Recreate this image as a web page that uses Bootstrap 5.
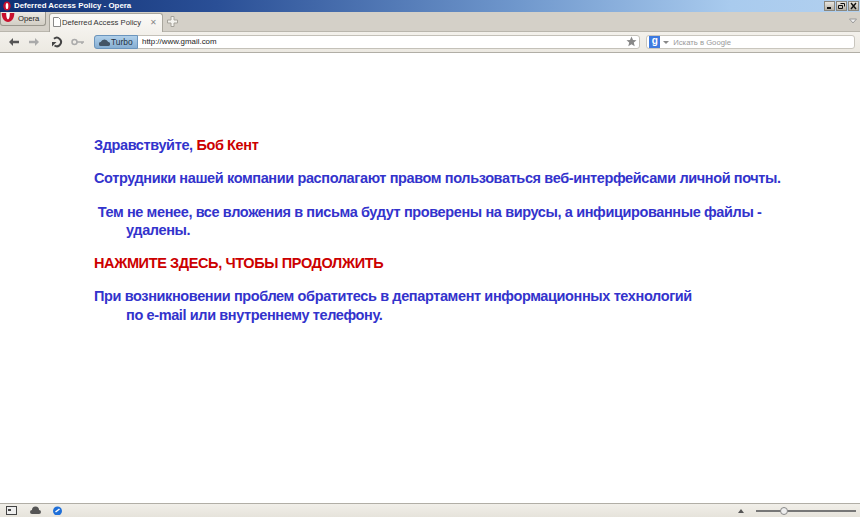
<!DOCTYPE html>
<html lang="ru"><head><meta charset="utf-8"><title>Deferred Access Policy - Opera</title>
<link href="https://cdn.jsdelivr.net/npm/bootstrap@5.3.0/dist/css/bootstrap.min.css" rel="stylesheet">
<style>
html,body{height:100%;margin:0;overflow:hidden}
body{font-family:"Liberation Sans",Arial,sans-serif;background:#fff;width:860px;height:517px}
.win{height:517px}
.titlebar{height:12px;flex:none;background:linear-gradient(90deg,#0f2f72 0,#2a4f96 25%,#6f97cc 60%,#a9cbee 85%,#b2d0ef 100%);color:#fff;font:bold 7.9px/12px "Liberation Sans",sans-serif;padding-left:14px;position:relative}
.olog{position:absolute;left:3px;top:1px;width:8px;height:10px}
.winbtns{position:absolute;right:1px;top:1px;gap:1px}
.wb{width:11px;height:10px;background:linear-gradient(#e8e5de,#b5b1a6);border:1px solid #8a877e;display:block}
.tabbar{height:19px;flex:none;background:#d4d0c8;position:relative;padding-left:49px}
.omenu{position:absolute;left:0;top:0;width:46px;height:14px;background:linear-gradient(#ece9e3,#d2cec5);border:1px solid #9a978e;border-top:0;border-radius:0 0 3px 3px;font-size:7.7px;line-height:13px;padding-left:17px;color:#222}
.omark{position:absolute;left:0;top:1px;width:14px;height:9px}
.thetab{width:114px;height:19px;margin-top:1px;background:linear-gradient(#fbfaf7,#f3f1ec);border:1px solid #a9a69d;border-bottom:0;border-radius:3px 3px 0 0;font-size:7.7px;line-height:17px;color:#333;position:relative;padding-left:12px}
.tabx{position:absolute;right:5px;top:0;color:#888;font-size:8px}
.tabdoc{position:absolute;left:3px;top:3px;width:8px;height:10px}
.plusicon{margin:4px 0 0 4px;width:11px;height:11px}
.chev{position:absolute;right:3px;top:6px;width:8px;height:6px}
.toolbar{height:22px;flex:none;background:linear-gradient(#f3f1ec,#ece9e2);border-top:1px solid #b9b6ad;border-bottom:1px solid #b1aea6;padding:0 5px 0 8px}
.ticon{width:12px;height:12px;flex:none}
.ti1{margin-right:8px}.ti2{margin-right:11px}.ti3{margin-right:8px}
.ticon.key{width:14px;margin-right:9px}
.addr{width:547px;height:14px;background:#fff;border:1px solid #c4c1b9;border-radius:3px;position:relative;font-size:7.9px;line-height:12px;color:#222}
.turbo{width:44px;height:14px;margin:-1px 0 0 -1px;background:linear-gradient(#b0d0ea,#86aed2);border:1px solid #6b95bd;border-radius:3px 0 0 3px;color:#234;padding-left:16px;margin-right:4px;position:relative;line-height:12px;flex:none;font-size:8.4px}
.cloudi{position:absolute;left:4px;top:2px;width:11px;height:8px}
.stari{position:absolute;right:2px;top:0;width:11px;height:11px}
.searchb{width:209px;height:14px;background:#fff;border:1px solid #c9c6be;border-radius:3px;margin-left:6px;font-size:7.7px;line-height:13px;color:#999;position:relative;padding-left:26px}
.gbox{position:absolute;left:2px;top:0;width:11px;height:12px;background:#3d7ae0;color:#fff;font-size:10px;line-height:10px;text-align:center;font-weight:bold}
.gdrop{position:absolute;left:16px;top:5px;width:0;height:0;border:3px solid transparent;border-top:3px solid #888;border-bottom:0}
.pagebody{flex:1 1 auto;background:#fff;padding:83px 70px 0 94px;color:#3333cc;font-size:14.5px;font-weight:bold;line-height:18.3px;letter-spacing:-.38px}
.pagebody p{margin:0 0 15px}
.hang{padding-left:32px;text-indent:-32px}
.red{color:#cc0000}
.statusbar{height:14px;flex:none;background:linear-gradient(#f1efe9,#e6e3db);border-top:1px solid #b1aea6;position:relative;padding-left:6px}
.si{width:11px;height:9px;margin-right:13px;flex:none}
.si2{margin-right:11px}
.sright{position:absolute;right:4px;top:1px;height:11px}
.tri{width:0;height:0;border:3px solid transparent;border-bottom:4px solid #555;border-top:0;margin-right:12px}
.slider{width:100px;height:2px;background:#777;position:relative}
.knob{position:absolute;left:24px;top:-3px;width:8px;height:8px;border-radius:50%;background:#eee;border:1px solid #888}
</style></head><body>
<div class="win d-flex flex-column">
<div class="titlebar">
<svg class="olog" viewBox="0 0 9 11"><ellipse cx="4.500" cy="5.500" rx="4.200" ry="5.200" fill="#c8102e"/><ellipse cx="4.500" cy="5.500" rx="1.500" ry="3.500" fill="#fff"/></svg>
Deferred Access Policy - Opera
<div class="winbtns d-flex">
<span class="wb"><svg width="9" height="8" class="d-block"><path d="M2 6h4" stroke="#111" stroke-width="2"/></svg></span>
<span class="wb"><svg width="9" height="8" class="d-block"><path d="M3.500 1.500h4v3M1.500 3.500h4v3h-4z" fill="none" stroke="#111"/></svg></span>
<span class="wb"><svg width="9" height="8" class="d-block"><path d="M2 1l5 6M7 1l-5 6" stroke="#111" stroke-width="1.400"/></svg></span>
</div></div>
<div class="tabbar d-flex">
<div class="omenu"><svg class="omark" viewBox="0 0 14 10"><path d="M0 0h14c0 6-3 10-7 10S0 6 0 0z" fill="#c8102e"/><path d="M5 0h4c0 5-1 7-2 7S5 5 5 0z" fill="#fff"/></svg>Opera</div>
<div class="thetab"><svg class="tabdoc" viewBox="0 0 8 10"><path d="M.5.5h5l2 2v7h-7z" fill="#fff" stroke="#888"/></svg>Deferred Access Policy<span class="tabx">✕</span></div>
<svg class="plusicon" viewBox="0 0 11 11"><path d="M4 .5h3v3.500h3.500v3H7v3.500H4V7H.5V4H4z" fill="#f4f3ef" stroke="#a5a29a"/></svg>
<svg class="chev" viewBox="0 0 8 6"><path d="M.5 1h7L4 5z" fill="#eee" stroke="#999"/></svg>
</div>
<div class="toolbar d-flex align-items-center">
<svg class="ticon ti1" viewBox="0 0 12 12"><path d="M1 6l4-4v2.800h6v2.400H5V10z" fill="#555"/></svg>
<svg class="ticon ti2" viewBox="0 0 12 12"><path d="M11 6L7 2v2.800H1v2.400h6V10z" fill="#aaa"/></svg>
<svg class="ticon ti3" viewBox="0 0 12 12"><path d="M3 2.800A4.200 4.200 0 1 1 3.500 9.500" fill="none" stroke="#444" stroke-width="2"/><path d="M1 10.500L1 6h4.500z" fill="#444"/></svg>
<svg class="ticon key" viewBox="0 0 14 12"><circle cx="3.500" cy="6" r="2.500" fill="none" stroke="#aaa" stroke-width="1.500"/><path d="M6 6h7M11 6v2" stroke="#aaa" stroke-width="1.500"/></svg>
<div class="addr d-flex"><div class="turbo"><svg class="cloudi" viewBox="0 0 11 8"><path d="M2 8a2 2 0 0 1-.3-4 4 4 0 0 1 7.500 0 2 2 0 0 1-.2 4z" fill="#456"/></svg>Turbo</div>http://www.gmail.com
<svg class="stari" viewBox="0 0 11 11"><path d="M5.500.5l1.500 3.500 3.500.3-2.700 2.300.9 3.600-3.200-2-3.200 2 .9-3.600L.5 4.300 4 4z" fill="#888"/></svg></div>
<div class="searchb"><span class="gbox">g</span><span class="gdrop"></span>Искать в Google</div>
</div>
<div class="pagebody">
<p>Здравствуйте, <span class="red">Боб Кент</span></p>
<p>Сотрудники нашей компании располагают правом пользоваться веб-интерфейсами личной почты.</p>
<p class="hang">&nbsp;Тем не менее, все вложения в письма будут проверены на вирусы, а инфицированные файлы - удалены.</p>
<p class="red">НАЖМИТЕ ЗДЕСЬ, ЧТОБЫ ПРОДОЛЖИТЬ</p>
<p class="hang">При возникновении проблем обратитесь в департамент информационных технологий<br>по e-mail или внутреннему телефону.</p>
</div>
<div class="statusbar d-flex align-items-center">
<svg class="si" viewBox="0 0 11 9"><rect x=".5" y=".5" width="10" height="8" fill="#eee" stroke="#444"/><rect x="2" y="3" width="3" height="2" fill="#444"/></svg>
<svg class="si si2" viewBox="0 0 11 9"><path d="M2 8a2 2 0 0 1 0-4 3.500 3.500 0 0 1 7 0 2 2 0 0 1 0 4z" fill="#555"/></svg>
<svg class="si" viewBox="0 0 11 9"><circle cx="5.500" cy="5" r="4.500" fill="#1f6fd8"/><path d="M3.500 6l4-3" stroke="#fff" stroke-width="1.500"/></svg>
<div class="sright d-flex align-items-center"><span class="tri"></span><div class="slider"><span class="knob"></span></div></div>
</div>
</div>
</body></html>
